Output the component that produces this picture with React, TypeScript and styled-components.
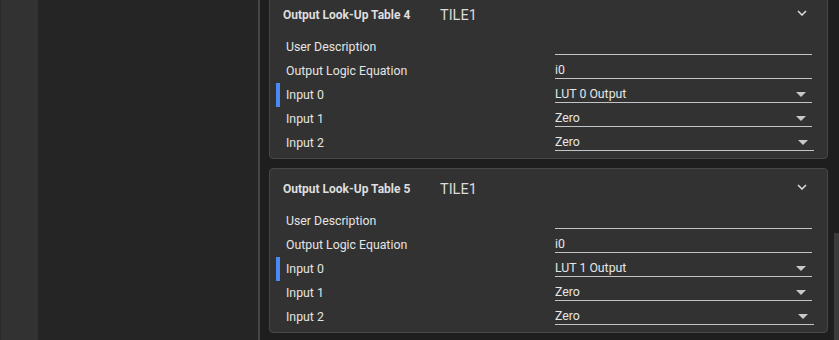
import { createGlobalStyle, styled } from 'styled-components';

const GlobalStyle = createGlobalStyle`
  html, body {
    margin: 0;
    padding: 0;
    background: #1e1e1e;
    overflow: hidden;
  }
  body {
    font-family: Roboto, "Liberation Sans", Arial, sans-serif;
  }
`;

const Screen = styled.div`
  display: flex;
  width: 839px;
  height: 340px;
  overflow: hidden;
`;

const Rail = styled.div`
  width: 37px;
  flex-shrink: 0;
  background: #323232;
  border-left: 1px solid #2a2a2a;
`;

const Sidebar = styled.div`
  width: 220px;
  flex-shrink: 0;
  background: #252525;
  border-right: 2px solid #464646;
`;

const Main = styled.div`
  flex: 1;
  display: flex;
  background: #1e1e1e;
  min-width: 0;
`;

// scrolled list: the first card is partly above the viewport
const CardList = styled.div`
  flex: 1;
  display: flex;
  flex-direction: column;
  gap: 9px;
  padding: 0 6px 0 9px;
  margin-top: -6px;
`;

const ScrollTrack = styled.div`
  width: 5px;
  flex-shrink: 0;
  display: flex;
  flex-direction: column;
`;

const ScrollThumb = styled.div`
  margin-top: 233px;
  flex: 1;
  background: #3b3b3b;
`;

const Card = styled.section`
  background: #323232;
  border: 1px solid #474747;
  border-radius: 4px;
  padding-bottom: 3px;
`;

const CardHeader = styled.div`
  display: flex;
  align-items: center;
  height: 40px;
  padding: 0 20px 0 13px;
`;

const Title = styled.div`
  width: 157px;
  font-size: 12px;
  font-weight: 700;
  color: #dedede;
`;

const Tile = styled.div`
  flex: 1;
  font-size: 14.5px;
  color: #dcdcdc;
`;

const Chevron = styled.svg`
  width: 10px;
  height: 6px;
  margin-top: -4px;
`;

const Row = styled.div<{ $active?: boolean }>`
  display: grid;
  grid-template-columns: 1fr 257px;
  height: 24px;
  margin-left: 6px;
  padding-right: 15px;
  border-left: 4px solid ${(p) => (p.$active ? '#4a8af4' : 'transparent')};
`;

const Label = styled.div`
  display: flex;
  align-items: center;
  padding-left: 6px;
  font-size: 12.3px;
  color: #e4e4e4;
`;

const Field = styled.div<{ $wide?: boolean }>`
  align-self: end;
  display: flex;
  align-items: center;
  justify-content: space-between;
  height: 16px;
  margin-bottom: 4px;
  margin-right: ${(p) => (p.$wide ? '-2px' : '0')};
  border-bottom: 1px solid #c4c4c4;
  font-size: 12.3px;
  color: #e6e6e6;
  padding-right: 6px;
`;

const Caret = styled.span`
  width: 0;
  height: 0;
  border-left: 5px solid transparent;
  border-right: 5px solid transparent;
  border-top: 5px solid #c8c8c8;
`;

type FieldRow = { label: string; value: string; select?: boolean; active?: boolean; wide?: boolean };

type LutProps = { index: number; lut: number };

const LutCard = ({ index, lut }: LutProps) => {
  const rows: FieldRow[] = [
    { label: 'User Description', value: '' },
    { label: 'Output Logic Equation', value: 'i0' },
    { label: 'Input 0', value: `LUT ${lut} Output`, select: true, active: true },
    { label: 'Input 1', value: 'Zero', select: true },
    { label: 'Input 2', value: 'Zero', select: true, wide: true },
  ];
  return (
    <Card>
      <CardHeader>
        <Title>Output Look-Up Table {index}</Title>
        <Tile>TILE1</Tile>
        <Chevron viewBox="0 0 10 6">
          <path d="M1 1 L5 5 L9 1" fill="none" stroke="#d8d8d8" strokeWidth="1.6" />
        </Chevron>
      </CardHeader>
      {rows.map((r) => (
        <Row key={r.label} $active={r.active}>
          <Label>{r.label}</Label>
          <Field $wide={r.wide}>
            <span>{r.value}</span>
            {r.select && <Caret />}
          </Field>
        </Row>
      ))}
    </Card>
  );
};

export default function App() {
  return (
    <>
      <GlobalStyle />
      <Screen>
        <Rail />
        <Sidebar />
        <Main>
          <CardList>
            <LutCard index={4} lut={0} />
            <LutCard index={5} lut={1} />
          </CardList>
          <ScrollTrack>
            <ScrollThumb />
          </ScrollTrack>
        </Main>
      </Screen>
    </>
  );
}
